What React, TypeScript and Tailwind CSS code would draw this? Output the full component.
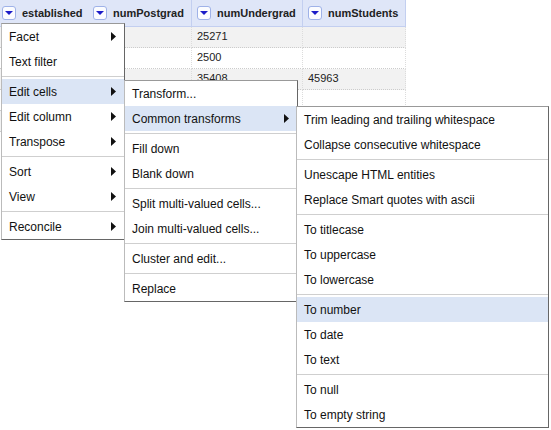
import React from "react";

type Item = { label: string; sub?: boolean; hl?: boolean } | "sep";

function Arrow() {
  return (
    <svg width="5" height="9" viewBox="0 0 5 9" className="shrink-0">
      <path d="M0 0 L5 4.5 L0 9 Z" fill="#111" />
    </svg>
  );
}

function Menu({ items, className }: { items: Item[]; className: string }) {
  return (
    <div
      className={`absolute bg-white border border-t-[#999] border-l-[#bbb] border-r-[#666] border-b-[#666] ${className}`}
    >
      {items.map((it, i) =>
        it === "sep" ? (
          <div key={i} className="h-[5px] flex items-center">
            <div className="h-px w-full bg-[#cfcfcf]" />
          </div>
        ) : (
          <div
            key={i}
            className={`h-[25px] flex items-center justify-between pl-[7px] pr-[8px] text-[12px] leading-[14px] text-[#111] whitespace-nowrap ${
              it.hl ? "bg-[#dbe5f5]" : ""
            }`}
          >
            <span>{it.label}</span>
            {it.sub && <Arrow />}
          </div>
        )
      )}
    </div>
  );
}

function HeaderButton() {
  return (
    <div className="w-[14px] h-[14px] shrink-0 border border-[#9fb2e8] rounded-[3px] bg-[#fbfcff] flex items-center justify-center">
      <svg width="8" height="4" viewBox="0 0 8 4">
        <path d="M0 0 L8 0 L4 4 Z" fill="#1c1cc8" />
      </svg>
    </div>
  );
}

const cols = [
  { name: "established", w: "w-[89px]", pl: "pl-[2px]", br: "border-r-transparent" },
  { name: "numPostgrad", w: "w-[103px]", pl: "pl-[4px]", br: "border-r-[#c3cff0]" },
  { name: "numUndergrad", w: "w-[111px]", pl: "pl-[5px]", br: "border-r-[#c3cff0]" },
  { name: "numStudents", w: "w-[103px]", pl: "pl-[5px]", br: "border-r-[#c3cff0]" },
];

const rows = [
  ["", "", "25271", ""],
  ["", "", "2500", ""],
  ["", "", "35408", "45963"],
  ["", "", "", ""],
  ["", "", "", ""],
];

const menu1: Item[] = [
  { label: "Facet", sub: true },
  { label: "Text filter" },
  "sep",
  { label: "Edit cells", sub: true, hl: true },
  { label: "Edit column", sub: true },
  { label: "Transpose", sub: true },
  "sep",
  { label: "Sort", sub: true },
  { label: "View", sub: true },
  "sep",
  { label: "Reconcile", sub: true },
];

const menu2: Item[] = [
  { label: "Transform..." },
  { label: "Common transforms", sub: true, hl: true },
  "sep",
  { label: "Fill down" },
  { label: "Blank down" },
  "sep",
  { label: "Split multi-valued cells..." },
  { label: "Join multi-valued cells..." },
  "sep",
  { label: "Cluster and edit..." },
  "sep",
  { label: "Replace" },
];

const menu3: Item[] = [
  { label: "Trim leading and trailing whitespace" },
  { label: "Collapse consecutive whitespace" },
  "sep",
  { label: "Unescape HTML entities" },
  { label: "Replace Smart quotes with ascii" },
  "sep",
  { label: "To titlecase" },
  { label: "To uppercase" },
  { label: "To lowercase" },
  "sep",
  { label: "To number", hl: true },
  { label: "To date" },
  { label: "To text" },
  "sep",
  { label: "To null" },
  { label: "To empty string" },
];

export default function App() {
  return (
    <div className="relative w-[551px] h-[430px] bg-white overflow-hidden font-['Liberation_Sans',Arial,sans-serif] text-[#111]">
      <div className="flex flex-col w-[406px]">
        <div className="flex">
          {cols.map((c) => (
            <div
              key={c.name}
              className={`${c.w} ${c.pl} h-[27px] shrink-0 bg-[#dfe6f8] border-r ${c.br} border-b border-b-[#c3cff0] flex items-center gap-[6px]`}
            >
              <HeaderButton />
              <span className="text-[11px] font-bold text-[#222] whitespace-nowrap">{c.name}</span>
            </div>
          ))}
        </div>
        {rows.map((r, ri) => (
          <div key={ri} className={`flex ${ri % 2 === 0 ? "bg-[#f2f2f2]" : "bg-white"}`}>
            {r.map((v, ci) => (
              <div
                key={ci}
                className={`${cols[ci].w} h-[21px] shrink-0 border-r border-r-[#dcdcdc] border-b border-dotted border-b-[#cccccc] pl-[5px] pt-[3px] text-[11px] leading-[13px] text-[#222]`}
              >
                {v}
              </div>
            ))}
          </div>
        ))}
      </div>

      <Menu items={menu1} className="left-[1px] top-[23px] w-[124px] z-10" />
      <Menu items={menu2} className="left-[124px] top-[80px] w-[174px] z-20" />
      <Menu items={menu3} className="left-[296px] top-[106px] w-[253px] z-30" />
    </div>
  );
}
